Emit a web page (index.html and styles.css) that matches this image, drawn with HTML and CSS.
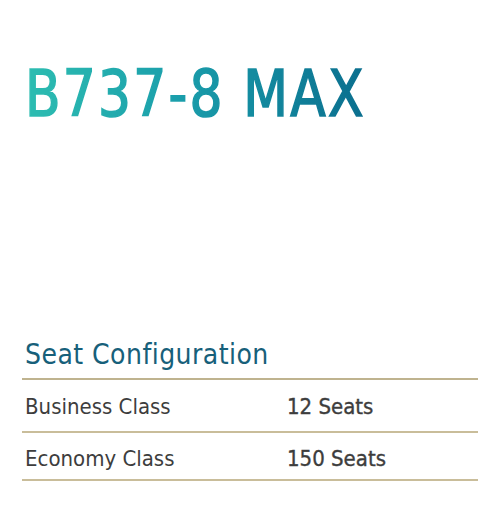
FILE: index.html
```html
<!DOCTYPE html>
<html>
<head>
<meta charset="utf-8">
<link rel="stylesheet" href="styles.css">
</head>
<body>
<div class="page">
  <h1 class="title">B737-8 MAX</h1>
  <section class="config">
    <h2 class="config-head">Seat Configuration</h2>
    <div class="row row-first">
      <span class="label">Business Class</span>
      <span class="value">12 Seats</span>
    </div>
    <div class="row">
      <span class="label">Economy Class</span>
      <span class="value">150 Seats</span>
    </div>
  </section>
</div>
</body>
</html>
```

FILE: styles.css
```css
html, body {
  margin: 0;
  padding: 0;
  background: #ffffff;
}
.page {
  width: 500px;
  height: 530px;
  box-sizing: border-box;
  padding: 0 22px;
  font-family: "DejaVu Sans Condensed", "DejaVu Sans", sans-serif;
}
.title {
  margin: 56px 0 0 3px;
  font-size: 64px;
  font-weight: normal;
  line-height: 76px;
  letter-spacing: 2.5px;
  display: inline-block;
  transform: scaleX(0.9);
  transform-origin: left center;
  background: linear-gradient(90deg, #2dbdb1 0%, #1a9eab 45%, #0a6e8e 100%);
  -webkit-background-clip: text;
  background-clip: text;
  color: transparent;
  -webkit-text-stroke: 1.6px transparent;
}
.config {
  margin-top: 205px;
}
.config-head {
  margin: 0;
  padding: 0 0 5px 3px;
  font-size: 28px;
  font-weight: normal;
  line-height: 36px;
  letter-spacing: 0.45px;
  color: #17607a;
  border-bottom: 2px solid #bfb38f;
}
.row {
  display: grid;
  grid-template-columns: 262px 1fr;
  padding: 13px 0 0 3px;
  height: 33px;
  align-items: start;
  border-bottom: 2px solid #c9bd9a;
  font-size: 22px;
  line-height: 26px;
  color: #3d3d3d;
}
.row-first {
  padding-top: 14px;
  height: 37px;
}
.value {
  -webkit-text-stroke: 0.35px #3d3d3d;
}
```
